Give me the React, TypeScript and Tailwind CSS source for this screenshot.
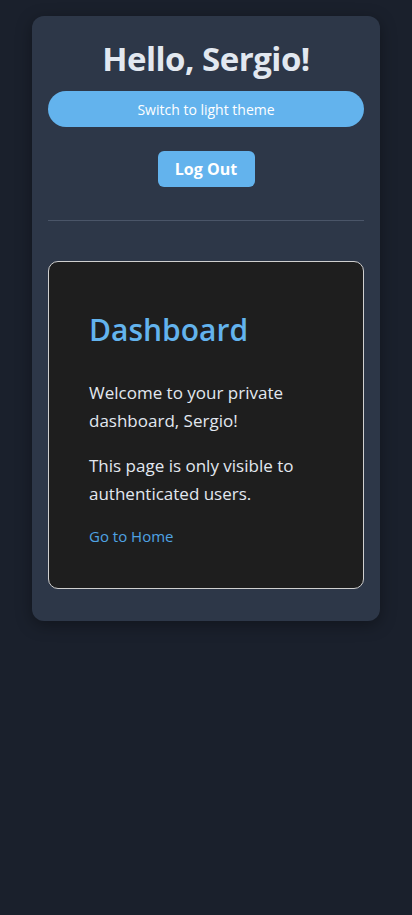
const App = () => {
  const name = "Sergio";

  return (
    <div
      className="min-h-screen w-full bg-[#1a202c] pt-4"
      style={{ fontFamily: '"Open Sans", "Noto Sans", sans-serif' }}
    >
      <div className="mx-auto w-[348px] rounded-xl bg-[#2d3748] px-4 pb-8 pt-6 shadow-[0_4px_16px_rgba(0,0,0,0.35)]">
        <h1 className="text-center text-[33px] font-bold leading-[38px] tracking-[-0.5px] text-[#e2e8f0]">
          {`Hello, ${name}!`}
        </h1>
        <button className="mt-[13px] h-9 w-full rounded-full bg-[#63b3ed] text-[14px] text-white">
          Switch to light theme
        </button>
        <div className="mt-6 flex justify-center">
          <button className="h-9 w-[97px] rounded-md bg-[#63b3ed] text-[16px] font-bold text-white">
            Log Out
          </button>
        </div>
        <hr className="mt-[33px] border-t border-[#4a5568]" />
        <div className="mt-10 rounded-[10px] border border-[#cfcfcf] bg-[#1e1e1e] px-10 pb-10 pt-[49px]">
          <h2 className="text-[30px] font-semibold leading-[38px] text-[#63b3ed]">
            Dashboard
          </h2>
          <p className="mt-[30px] text-[17px] leading-7 text-[#e2e8f0]">
            {`Welcome to your private dashboard, ${name}!`}
          </p>
          <p className="mt-[17px] text-[17px] leading-7 text-[#e2e8f0]">
            This page is only visible to authenticated users.
          </p>
          <a href="#" className="mt-4 block text-[15px] leading-6 text-[#4fa3e3]">
            Go to Home
          </a>
        </div>
      </div>
    </div>
  );
};

export default App;
